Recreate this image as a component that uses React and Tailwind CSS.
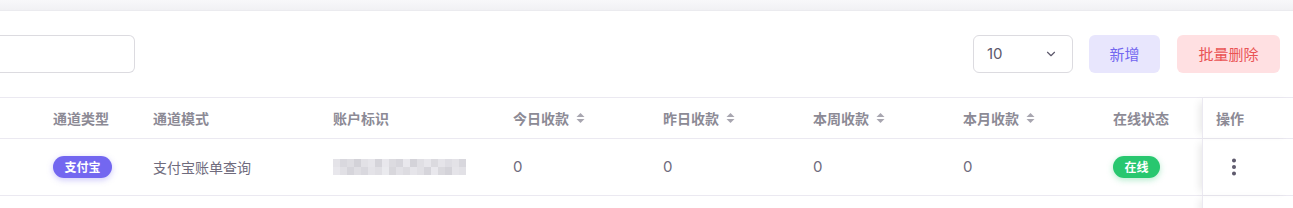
import React from 'react';
import { ChevronDown, EllipsisVertical } from 'lucide-react';

const cols = [
  { key: 'type', label: '通道类型', w: 'w-[100px]' },
  { key: 'mode', label: '通道模式', w: 'w-[180px]' },
  { key: 'acct', label: '账户标识', w: 'w-[180px]' },
  { key: 'today', label: '今日收款', w: 'w-[150px]', sort: true },
  { key: 'yday', label: '昨日收款', w: 'w-[150px]', sort: true },
  { key: 'week', label: '本周收款', w: 'w-[150px]', sort: true },
  { key: 'month', label: '本月收款', w: 'w-[150px]', sort: true },
  { key: 'online', label: '在线状态', w: 'w-[89px]' },
];

const blur = [
  ['#e4e3e8', '#d9d8de', '#dedde2', '#d3d2d8', '#e2e1e6', '#e6e5ea', '#d5d4da', '#e8e7ec', '#dcdbe0', '#d7d6dc', '#e9e8ed', '#d4d3d9', '#e0dfe4', '#e7e6eb', '#dbdadf', '#e5e4e9', '#dedde3', '#e3e2e7', '#d8d7dd'],
  ['#e8e7ec', '#e1e0e5', '#d6d5db', '#dfdee3', '#d9d8de', '#e4e3e8', '#e0dfe4', '#eaeaee', '#d8d7dc', '#e2e1e6', '#dddce1', '#e6e5ea', '#e1e0e5', '#d6d5db', '#e9e8ed', '#dad9de', '#d4d3d9', '#e5e4e9', '#e2e1e6'],
];

function SortIcon() {
  return (
    <svg width="9" height="12" viewBox="0 0 9 12" className="ml-[7px]">
      <path d="M4.5 1 L8.5 5 H0.5 Z" fill="#a8a6b0" />
      <path d="M4.5 11 L8.5 7 H0.5 Z" fill="#a8a6b0" />
    </svg>
  );
}

export default function App() {
  return (
    <div className="w-[1293px] h-[208px] overflow-hidden bg-white" style={{ fontFamily: '"Noto Sans CJK SC", Inter, sans-serif' }}>
      <div className="h-[11px] bg-gradient-to-b from-[#f8f8fa] to-[#f1f1f4] border-b border-[#ebebef]" />
      <div className="flex items-start h-[86px] pt-[24px] pr-[13px]">
        <div className="w-[135px] h-[38px] border border-[#dcdbe0] border-l-0 rounded-r-[6px]" />
        <div className="flex-1" />
        <div className="w-[100px] h-[38px] border border-[#dcdbe0] rounded-[6px] flex items-center justify-between pl-[13px] pr-[14px] text-[15px] text-[#5d596c]" style={{ fontFamily: 'Inter, sans-serif' }}>
          <span>10</span>
          <ChevronDown size={14} strokeWidth={2} className="text-[#5d596c]" />
        </div>
        <button className="ml-[16px] w-[71px] h-[38px] rounded-[6px] bg-[#e8e6fd] text-[#7367f0] text-[15px]">新增</button>
        <button className="ml-[17px] w-[103px] h-[38px] rounded-[6px] bg-[#ffe0e2] text-[#ea5455] text-[15px]">批量删除</button>
      </div>
      <div className="border-t border-[#ebe9f1]">
        <div className="flex h-[41px] border-b border-[#ebe9f1] items-center">
          <div className="w-[53px]" />
          {cols.map(c => (
            <div key={c.key} className={`${c.w} flex items-center text-[14px] font-semibold text-[#8c8a95]`}>
              {c.label}
              {c.sort && <SortIcon />}
            </div>
          ))}
          <div className="flex-1 h-full flex items-center pl-[13px] border-l border-[#ebe9f1] shadow-[-6px_0_8px_-4px_rgba(0,0,0,0.1)] text-[14px] font-semibold text-[#8c8a95]">操作</div>
        </div>
        <div className="flex h-[57px] border-b border-[#ebe9f1] items-center text-[14px] text-[#6f6b7d]">
          <div className="w-[53px]" />
          <div className="w-[100px]">
            <span className="inline-flex items-center justify-center w-[59px] h-[22px] rounded-full bg-[#7367f0] text-white text-[12px] font-semibold shadow-[0_2px_6px_rgba(115,103,240,0.35)]">支付宝</span>
          </div>
          <div className="w-[180px]">支付宝账单查询</div>
          <div className="w-[180px]">
            <div className="w-[133px] flex flex-col">
              {blur.map((row, i) => (
                <div key={i} className="flex h-[8px]">
                  {row.map((c, j) => (
                    <div key={j} className="w-[7px] h-full" style={{ background: c }} />
                  ))}
                </div>
              ))}
            </div>
          </div>
          {['today', 'yday', 'week', 'month'].map(k => (
            <div key={k} className="w-[150px] text-[15px]" style={{ fontFamily: 'Inter, sans-serif' }}>0</div>
          ))}
          <div className="w-[89px]">
            <span className="inline-flex items-center justify-center w-[47px] h-[22px] rounded-full bg-[#28c76f] text-white text-[12px] font-semibold shadow-[0_2px_6px_rgba(40,199,111,0.35)]">在线</span>
          </div>
          <div className="flex-1 h-full flex items-center pl-[20px] border-l border-[#ebe9f1] shadow-[-6px_0_8px_-4px_rgba(0,0,0,0.1)]">
            <EllipsisVertical size={22} strokeWidth={2.4} className="text-[#5d596c]" />
          </div>
        </div>
        <div className="flex h-[20px]">
          <div className="flex-1" />
          <div className="w-[91px] h-full border-l border-[#ebe9f1] shadow-[-6px_0_8px_-4px_rgba(0,0,0,0.1)]" />
        </div>
      </div>
    </div>
  );
}
